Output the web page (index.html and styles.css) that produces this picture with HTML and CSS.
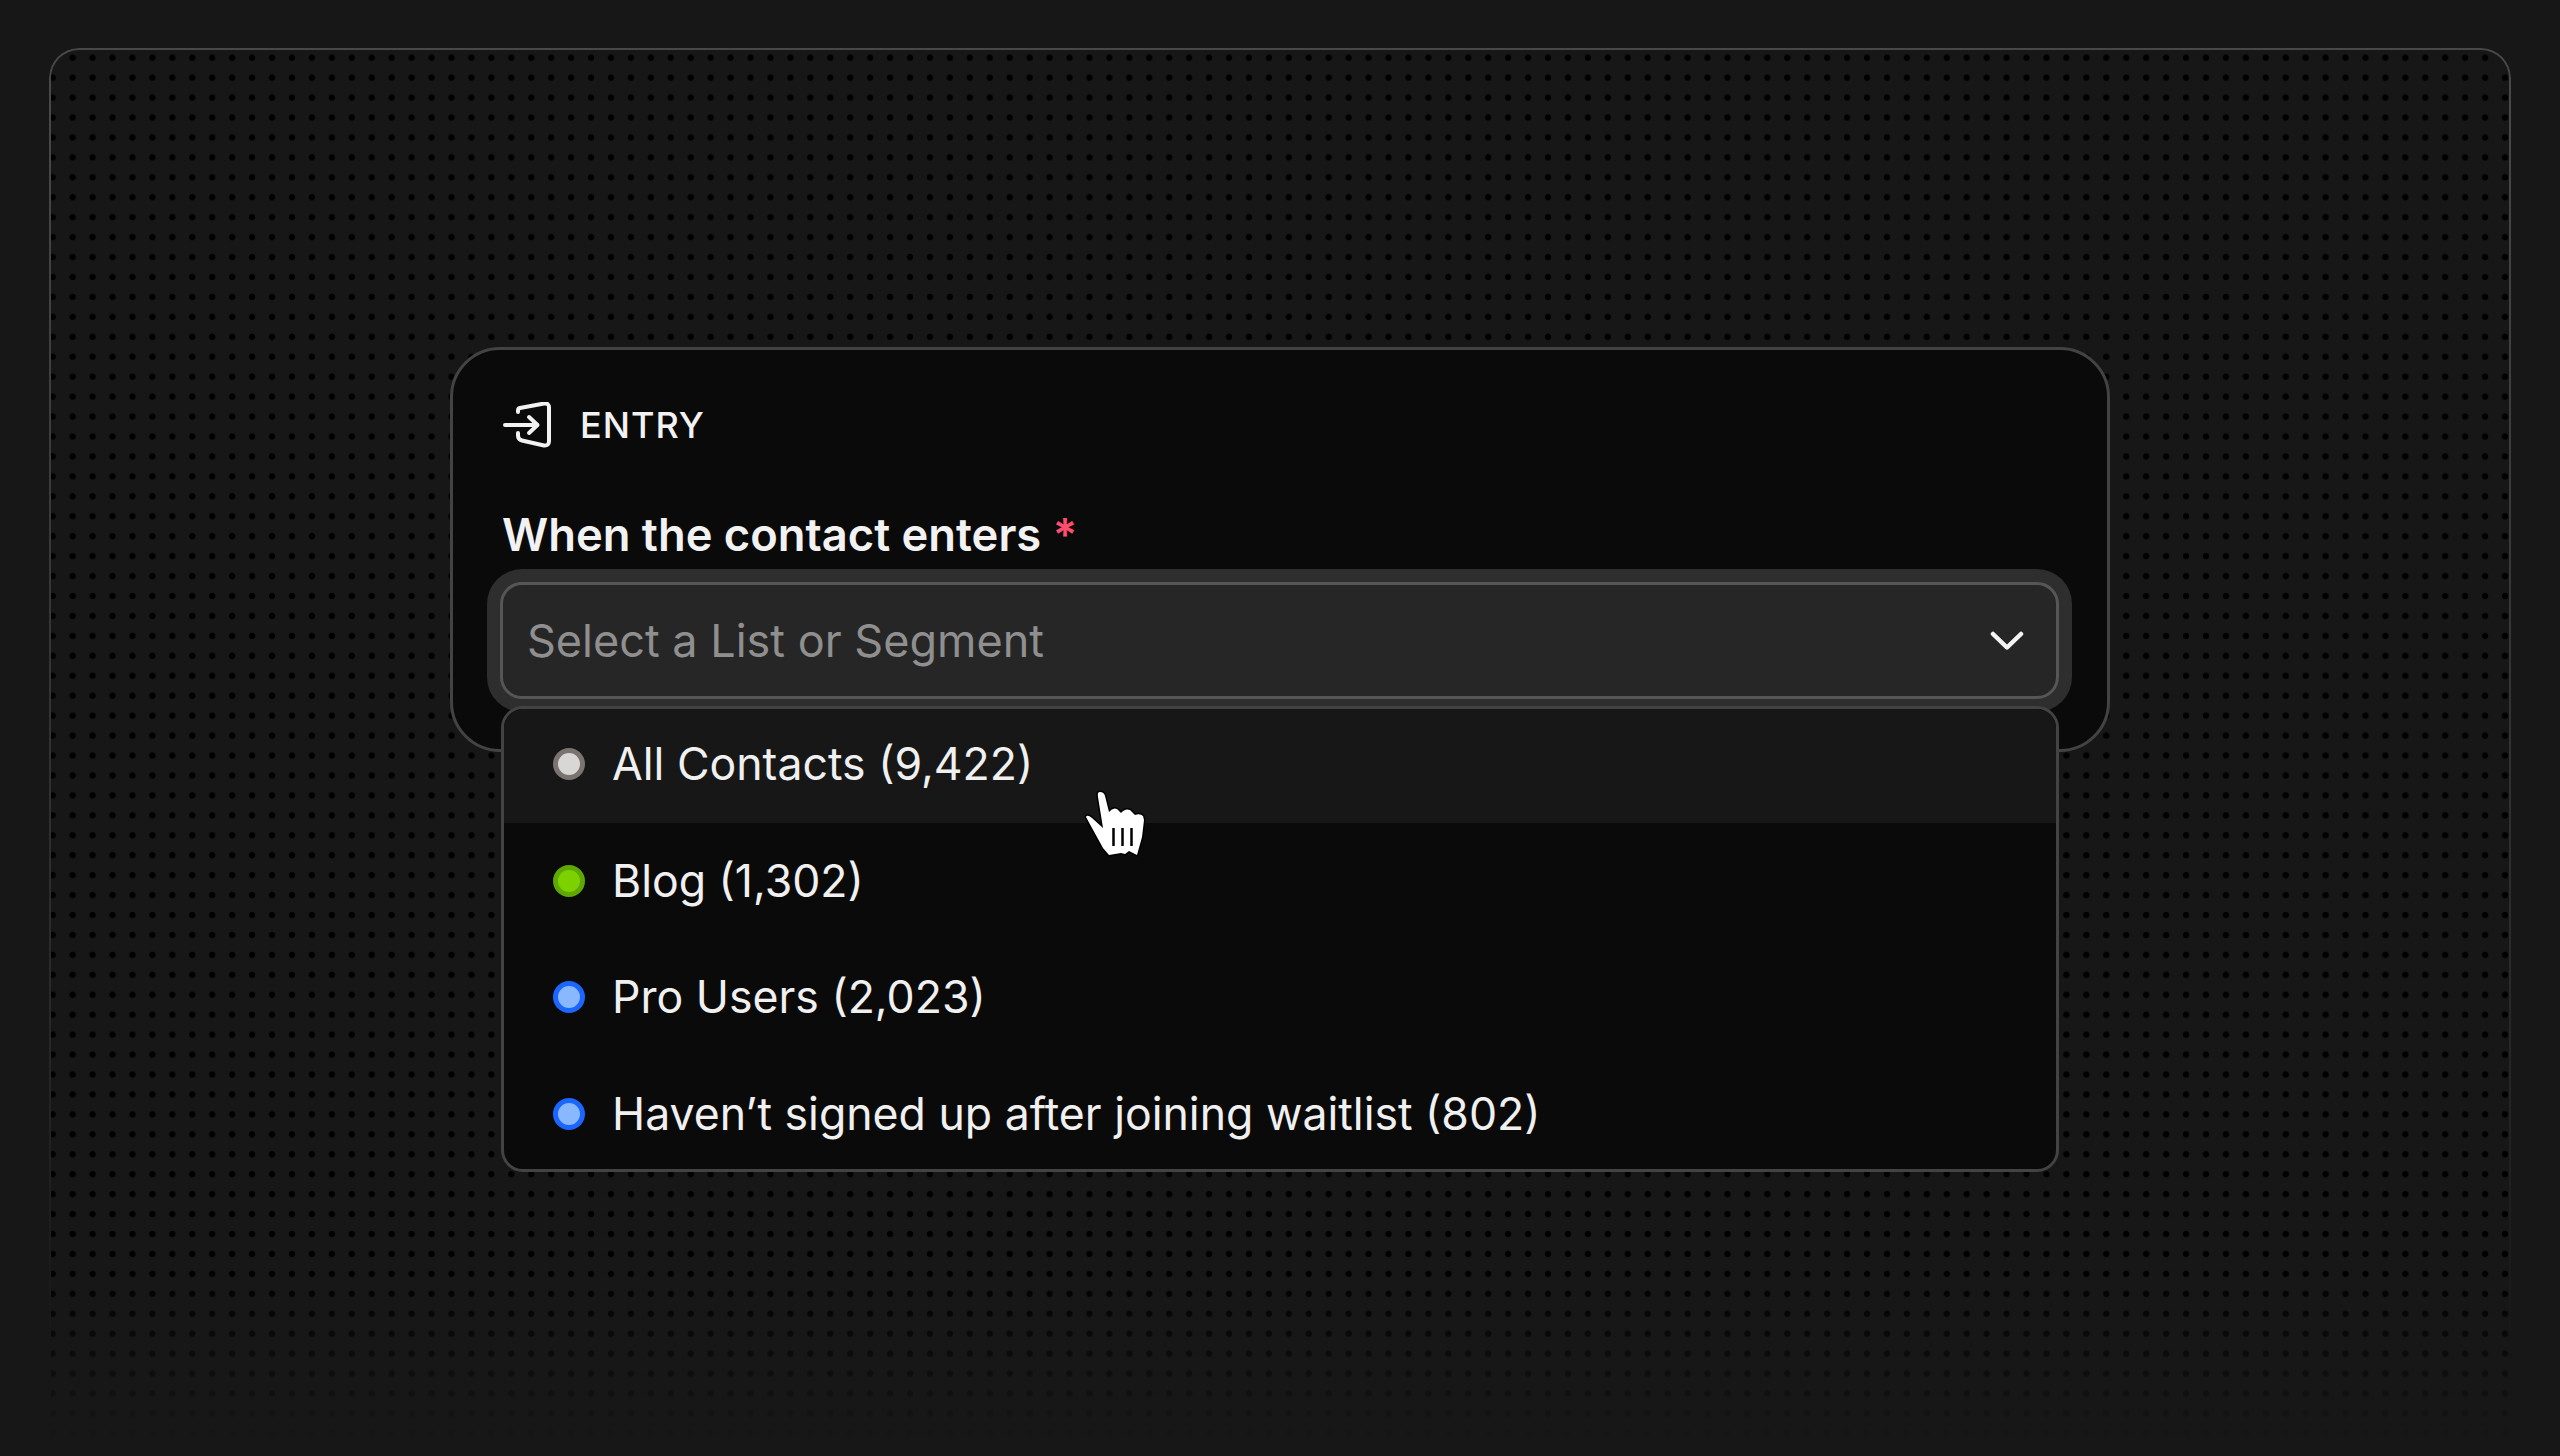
FILE: index.html
```html
<!DOCTYPE html>
<html>
<head>
    <link rel="stylesheet" href="styles.css">
</head>
<body>
    <div class="frame">
        <div class="entry-card">
            <div class="entry-head">
                <svg class="entry-icon" viewBox="0 0 50 46" fill="none" stroke="#f2f2f2" stroke-width="4" stroke-linecap="round" stroke-linejoin="round">
                    <path d="M2 23H34"/>
                    <path d="M26 15L34.5 23L26 31"/>
                    <path d="M15 10V8.500Q15 6.500 17 6L41 1.500Q46 1 46 5.500V39Q46 44 41 43.500L19 38.500Q15 37.500 15 33.500V31"/>
                </svg>
                <span class="entry-title">ENTRY</span>
            </div>
            <label class="field-label">When the contact enters <span class="required">*</span></label>
            <div class="select-wrap">
                <div class="select-box">
                    <span class="placeholder">Select a List or Segment</span>
                    <svg class="chevron" viewBox="0 0 34 20" fill="none" stroke="#f4f4f4" stroke-width="4.500" stroke-linecap="round" stroke-linejoin="round">
                        <path d="M3 3L17 16.500L31 3"/>
                    </svg>
                </div>
                <div class="menu">
                    <div class="menu-row hovered"><span class="dot dot-grey"></span>All Contacts (9,422)</div>
                    <div class="menu-row"><span class="dot dot-green"></span>Blog (1,302)</div>
                    <div class="menu-row"><span class="dot dot-blue"></span>Pro Users (2,023)</div>
                    <div class="menu-row"><span class="dot dot-blue"></span>Haven’t signed up after joining waitlist (802)</div>
                </div>
                <svg class="hand" viewBox="32 19 66 70">
                    <path class="hand-shape" d="M36 47Q37 44 42 48L53 58L48 27Q47 22 50 22Q54 22 55 26L59 42Q63 37 67 39L71 43Q75 38 80 40L85 45Q90 43 93 46L94 50L92 67L87 85L79 81L75 84L71 83L59 85L53 78Z"/>
                    <path class="hand-bars" d="M63.500 58V76M72.500 58V76M81.500 58V76"/>
                </svg>
            </div>
        </div>
    </div>
</body>
</html>
```

FILE: styles.css
```css
html, body {
    margin: 0;
    height: 100%;
}
body {
    font-family: Inter, "Liberation Sans", sans-serif;
    background-color: #171717;
    color: #f2f2f2;
    overflow: hidden;
}

/* dotted canvas, border and dots fade out towards the bottom */
.frame {
    position: relative;
    box-sizing: border-box;
    height: 1408px;
    margin: 48px 49px 0;
    padding-top: 299px;
    display: flex;
    justify-content: center;
}
.frame::before {
    content: "";
    position: absolute;
    inset: 0;
    border: 2px solid #484848;
    border-bottom: none;
    border-radius: 30px 30px 0 0;
    -webkit-mask-image: linear-gradient(180deg, #000 5%, rgba(0,0,0,0.35) 70%, transparent 93%);
    mask-image: linear-gradient(180deg, #000 5%, rgba(0,0,0,0.35) 70%, transparent 93%);
}
.frame::after {
    content: "";
    position: absolute;
    inset: 2px 2px 0;
    border-radius: 28px 28px 0 0;
    background-image: radial-gradient(circle, #000 2.700px, rgba(0,0,0,0) 3.600px);
    background-size: 19.950px 19.950px;
    background-position: -8.270px -2.270px;
    -webkit-mask-image: linear-gradient(180deg, #000 86%, transparent 99%);
    mask-image: linear-gradient(180deg, #000 86%, transparent 99%);
}

.entry-card {
    position: relative;
    z-index: 1;
    box-sizing: border-box;
    width: 1660px;
    height: 405px;
    padding: 52px 48px 0 47px;
    background: #0a0a0a;
    border: 3px solid #434343;
    border-radius: 50px;
}
.entry-head {
    display: flex;
    align-items: center;
    gap: 27px;
    margin-left: 3px;
}
.entry-icon {
    width: 50px;
    height: 46px;
}
.entry-title {
    font-size: 36px;
    font-weight: 500;
    letter-spacing: 1px;
    line-height: 46px;
}
.field-label {
    display: block;
    margin: 61px 0 0 2px;
    font-size: 45.300px;
    font-weight: 600;
    line-height: 52px;
}
.required {
    color: #ff4d6d;
}

.select-wrap {
    position: relative;
    margin-top: 21px;
}
.select-box {
    box-sizing: border-box;
    height: 117px;
    display: flex;
    align-items: center;
    justify-content: space-between;
    padding: 0 32px 0 24px;
    background: #262626;
    border: 3px solid #565656;
    border-radius: 22px;
    box-shadow: 0 0 0 13px #2e2e2e;
}
.placeholder {
    font-size: 45px;
    color: #8f8f8f;
}
.chevron {
    width: 34px;
    height: 20px;
}

.menu {
    position: absolute;
    top: 124px;
    left: 1px;
    right: 0;
    box-sizing: border-box;
    height: 466px;
    background: #0a0a0a;
    border: 3px solid #434343;
    border-radius: 22px;
    overflow: hidden;
}
.menu-row {
    height: 116.500px;
    display: flex;
    align-items: center;
    gap: 27px;
    padding-left: 49px;
    font-size: 44.600px;
    color: #f0f0f0;
}
.menu-row:first-child {
    margin-top: -3px;
}
.menu-row.hovered {
    background: #171717;
}
.dot {
    box-sizing: border-box;
    width: 32px;
    height: 32px;
    border-radius: 50%;
    border: 5px solid;
}
.dot-grey {
    background: #d9d7d5;
    border-color: #7b736f;
}
.dot-green {
    background: #7ed100;
    border-color: #5ea800;
}
.dot-blue {
    background: #8ab8ff;
    border-color: #1a66ff;
}

.hand {
    position: absolute;
    top: 207px;
    left: 582px;
    width: 66px;
    height: 70px;
    overflow: visible;
}
.hand-shape {
    fill: #fff;
    stroke: #000;
    stroke-width: 3;
    stroke-linejoin: round;
    paint-order: stroke;
}
.hand-bars {
    fill: none;
    stroke: #000;
    stroke-width: 2.500;
}
```
